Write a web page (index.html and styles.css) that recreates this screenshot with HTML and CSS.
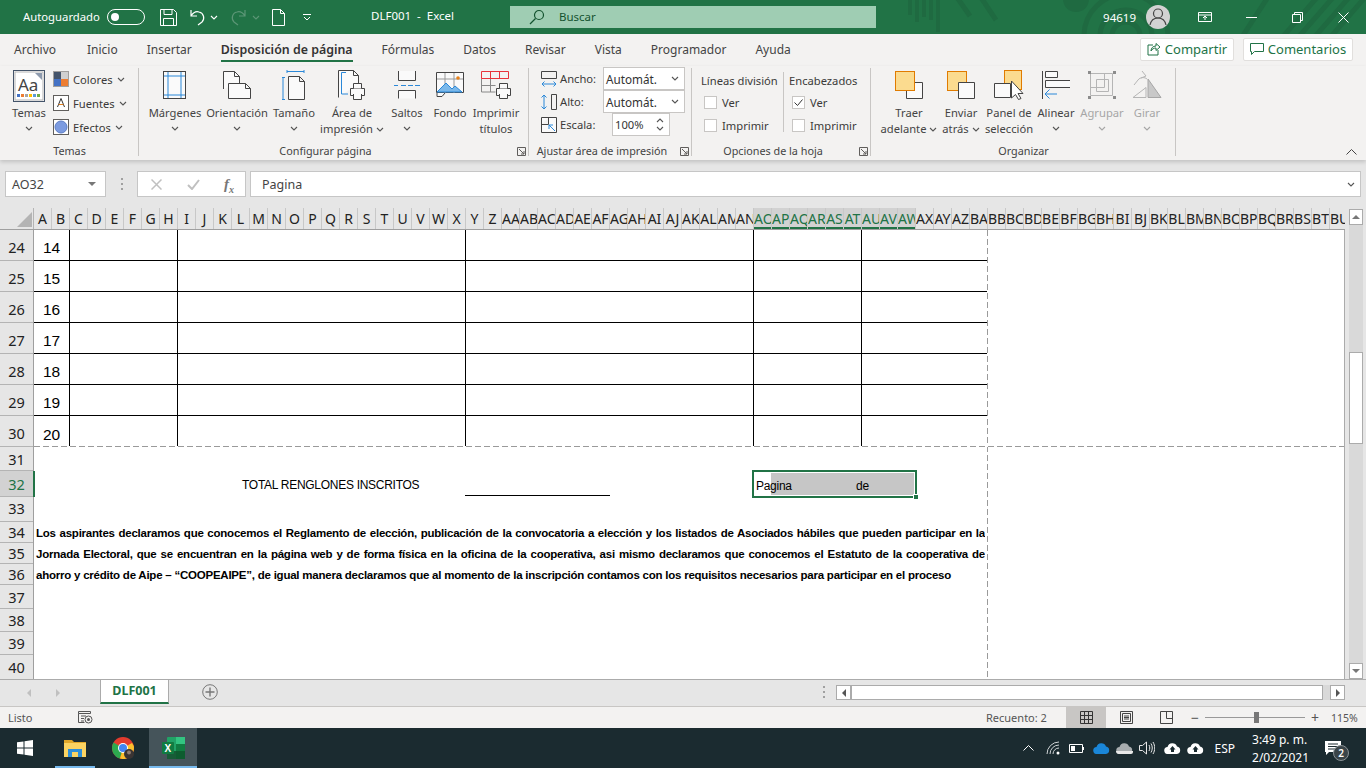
FILE: index.html
```html
<!DOCTYPE html>
<html lang="es">
<head>
  <meta charset="UTF-8" />
  <title>DLF001 - Excel</title>
  <link rel="stylesheet" href="styles.css">
</head>
<body>

  <svg class="sprite" aria-hidden="true">
    <symbol id="chev" viewBox="0 0 8 5"><path d="M1 1l3 3 3-3" fill="none" stroke="currentColor" stroke-width="1.1"/></symbol>
    <symbol id="launch" viewBox="0 0 9 9"><path d="M.5.5h8v8h-8z M2 2l5 5 M7 4v3H4" fill="none" stroke="#605e5c"/></symbol>
    <symbol id="cloudup" viewBox="0 0 17 11"><path d="M4 11a3.5 3.5 0 0 1-.5-7A5 5 0 0 1 13 3.500a3.800 3.800 0 0 1 0 7.500z" fill="#fff"/><path d="M8.500 3l3 3.500H10V9H7V6.500H5.500z" fill="#1b2b30"/></symbol>
  </svg>

  <!-- title bar -->
  <header class="titlebar">
    <svg class="title-art" viewBox="0 0 506 34">
      <g fill="#1f6a41">
        <rect x="48" y="0" width="4" height="15"/><rect x="55" y="0" width="4" height="22"/><rect x="62" y="0" width="4" height="17"/><rect x="69" y="0" width="4" height="20"/><rect x="76" y="0" width="4" height="32"/>
        <circle cx="216" cy="-1" r="13"/>
      </g>
      <g fill="none" stroke="#1f6a41" stroke-width="5">
        <circle cx="266" cy="36" r="14"/><circle cx="266" cy="36" r="26"/><circle cx="266" cy="36" r="42"/>
        <path d="M96 -4l14 20M120 -4l16 24M420 40l40-46M436 40l40-46M452 40l40-46M468 40l40-46M380 40l30-46"/>
      </g>
    </svg>
    <div class="autosave">
      <span class="autosave-text">Autoguardado</span>
      <span class="toggle"><i></i></span>
    </div>
    <svg class="qat save" viewBox="0 0 17 17" width="17" height="17"><path d="M.5.5h13l3 3v13H.5z M4 .5v5h8v-5 M3.500 16.500v-7h10v7" fill="none" stroke="#fff"/></svg>
    <svg class="qat undo" viewBox="0 0 16 17" width="16" height="17"><path d="M1 1v6h6 M1 7c2-3 5-5 8-4 5 1 6 7 3 10l-4 3" fill="none" stroke="#fff" stroke-width="1.200"/></svg>
    <svg class="chev chev-w"><use href="#chev"/></svg>
    <svg class="qat redo" viewBox="0 0 16 17" width="16" height="17"><path d="M15 1v6H9 M15 7c-2-3-5-5-8-4-5 1-6 7-3 10l4 3" fill="none" stroke="#5c9676" stroke-width="1.200"/></svg>
    <svg class="chev chev-dim"><use href="#chev"/></svg>
    <svg class="qat newdoc" viewBox="0 0 13 17" width="13" height="17"><path d="M.5.5h8l4 4v12H.500z M8.500.5v4h4" fill="none" stroke="#fff"/></svg>
    <svg class="qat more" viewBox="0 0 8 7" width="8" height="7"><path d="M0 .5h8 M1 3l3 3 3-3" fill="none" stroke="#fff"/></svg>
    <div class="doc-title">DLF001&nbsp; -&nbsp; Excel</div>
    <div class="search">
      <svg viewBox="0 0 16 16" width="16" height="16"><circle cx="10" cy="6" r="4.500" fill="none" stroke="#14532f" stroke-width="1.200"/><path d="M6.500 9.500L1 15" stroke="#14532f" stroke-width="1.200"/></svg>
      <span class="search-text">Buscar</span>
    </div>
    <div class="title-right">
      <span class="user-id">94619</span>
      <span class="avatar">
        <svg viewBox="0 0 24 24" width="24" height="24"><circle cx="12" cy="8.500" r="4.500" fill="none" stroke="#444" stroke-width="1.200"/><path d="M4 20c1-5 4-7 8-7s7 2 8 7" fill="none" stroke="#444" stroke-width="1.200"/></svg>
      </span>
      <svg class="win-btn display" viewBox="0 0 14 11" width="14" height="11"><path d="M.5.5h13v9H.5z M.5 3h13 M7 8V4.500 M5 6l2-2 2 2" fill="none" stroke="#fff"/></svg>
      <svg class="win-btn minim" viewBox="0 0 11 1" width="11" height="1"><path d="M0 .5h11" stroke="#fff"/></svg>
      <svg class="win-btn resto" viewBox="0 0 11 11" width="11" height="11"><path d="M.5 2.500h8v8h-8z M2.500 2.500v-2h8v8h-2" fill="none" stroke="#fff"/></svg>
      <svg class="win-btn closex" viewBox="0 0 11 11" width="11" height="11"><path d="M.5.5l10 10M10.500.5l-10 10" stroke="#fff"/></svg>
    </div>
  </header>

  <!-- ribbon tabs -->
  <nav class="tabs">
    <span class="tab-first">Archivo</span>
    <span>Inicio</span>
    <span>Insertar</span>
    <span class="tab-active">Disposición de página</span>
    <span>Fórmulas</span>
    <span>Datos</span>
    <span>Revisar</span>
    <span>Vista</span>
    <span>Programador</span>
    <span>Ayuda</span>
    <div class="tab-actions">
      <button class="pill pill-share">
        <svg viewBox="0 0 14 14" width="14" height="14"><path d="M6 3H1v10h10V8 M4 9c0-3 2-5 5-5V1.500L13 5 9 8.500V6C7 6 5 7 4 9z" fill="none" stroke="#217346"/></svg>
        Compartir
      </button>
      <button class="pill pill-comments">
        <svg viewBox="0 0 14 14" width="14" height="14"><path d="M.5 1.500h13v8h-9L1.500 12.500v-3h-1z" fill="none" stroke="#217346"/></svg>
        Comentarios
      </button>
    </div>
  </nav>

  <!-- ribbon -->
  <section class="ribbon">
    <div class="group group-temas">
      <div class="group-body">
        <div class="big big-temas">
          <svg class="big-icon" viewBox="0 0 32 32" width="32" height="32">
            <rect x=".5" y=".5" width="31" height="31" fill="#fff" stroke="#44546a"/>
            <rect x="2" y="2" width="28" height="28" fill="#fff" stroke="#b5b5b5"/>
            <path d="M22 3h7v7z" fill="#8d9aae"/>
            <text x="5" y="21" class="aa">Aa</text>
            <g><rect x="4" y="24" width="3" height="3" fill="#4472c4"/><rect x="8" y="24" width="3" height="3" fill="#ed7d31"/><rect x="12" y="24" width="3" height="3" fill="#a5a5a5"/><rect x="16" y="24" width="3" height="3" fill="#ffc000"/><rect x="20" y="24" width="3" height="3" fill="#5b9bd5"/><rect x="24" y="24" width="3" height="3" fill="#70ad47"/></g>
          </svg>
          <span>Temas</span>
          <svg class="chev"><use href="#chev"/></svg>
        </div>
        <div class="theme-list">
          <div class="theme-item">
            <svg viewBox="0 0 16 16" width="16" height="16"><rect x=".5" y=".5" width="15" height="15" fill="#fff" stroke="#a19f9d"/><rect x="1" y="1" width="7" height="7" fill="#44546a"/><rect x="8" y="1" width="7" height="7" fill="#d0d0d0"/><rect x="1" y="8" width="7" height="7" fill="#4472c4"/><rect x="8" y="8" width="7" height="7" fill="#ed7d31"/></svg>
            <span>Colores</span><svg class="chev"><use href="#chev"/></svg>
          </div>
          <div class="theme-item">
            <svg viewBox="0 0 16 16" width="16" height="16"><rect x=".5" y=".5" width="15" height="15" fill="#fff" stroke="#605e5c"/><path d="M4.500 12L8 3.500 11.500 12" fill="none" stroke="#333"/><path d="M5.500 9.500h5" stroke="#e08020"/></svg>
            <span>Fuentes</span><svg class="chev"><use href="#chev"/></svg>
          </div>
          <div class="theme-item">
            <svg viewBox="0 0 16 16" width="16" height="16"><rect x=".5" y=".5" width="15" height="15" fill="#fff" stroke="#605e5c"/><circle cx="8" cy="8" r="6" fill="#7c9be0" stroke="#5b7cc4"/></svg>
            <span>Efectos</span><svg class="chev"><use href="#chev"/></svg>
          </div>
        </div>
      </div>
      <div class="group-label">Temas</div>
    </div>

    <div class="group group-config">
      <div class="group-body config-grid">
        <div class="big">
          <svg class="big-icon" viewBox="0 0 24 28" width="24" height="28"><rect x=".5" y=".5" width="22" height="27" fill="#fafafa" stroke="#444"/><path d="M5 1v26M18 1v26M1 5h21M1 24h21" stroke="#2b88d8"/></svg>
          <span>Márgenes</span>
          <svg class="chev"><use href="#chev"/></svg>
        </div>
        <div class="big">
          <svg class="big-icon" viewBox="0 0 28 28" width="28" height="28"><path d="M.5 18V.5h11l5 5V12" fill="#fafafa" stroke="#444"/><path d="M11.500.5v5h5" fill="none" stroke="#444"/><path d="M5.500 12.500h17l5 5v10h-22z" fill="#fafafa" stroke="#444"/><path d="M22.500 12.500v5h5" fill="none" stroke="#444"/></svg>
          <span>Orientación</span>
          <svg class="chev"><use href="#chev"/></svg>
        </div>
        <div class="big">
          <svg class="big-icon" viewBox="0 0 24 30" width="24" height="30"><path d="M5 1.500h17M5 0v3M22 0v3M1 7v23M0 7.500h3M0 29.500h3" stroke="#2b88d8" fill="none"/><path d="M6.500 6.500h11l5 5v18h-16z M17.500 6.500v5h5" fill="#fafafa" stroke="#444"/></svg>
          <span>Tamaño</span>
          <svg class="chev"><use href="#chev"/></svg>
        </div>
        <div class="big">
          <svg class="big-icon" viewBox="0 0 28 30" width="28" height="30"><path d="M.5 27.500V.5h15l5 5v8" fill="#fafafa" stroke="#444"/><path d="M15.500.5v5h5" fill="none" stroke="#444"/><path d="M8 2.500H3.500V24H10" fill="none" stroke="#2b88d8"/><path d="M12.500 18.500h14v7h-14z" fill="#fafafa" stroke="#444"/><path d="M15.500 18.500v-5h8v5M15.500 24v5.500h8V24" fill="#fafafa" stroke="#444"/></svg>
          <span>Área de</span>
          <span class="with-chev">impresión <svg class="chev"><use href="#chev"/></svg></span>
        </div>
        <div class="big">
          <svg class="big-icon" viewBox="0 0 26 28" width="26" height="28"><path d="M4.500 0v9.500h17V0M4.500 27.500V19.500h17v8" fill="#fafafa" stroke="#444"/><path d="M0 14.500h4M7 14.500h5M14 14.500h5M21 14.500h5" stroke="#2b88d8"/></svg>
          <span>Saltos</span>
          <svg class="chev"><use href="#chev"/></svg>
        </div>
        <div class="big">
          <svg class="big-icon" viewBox="0 0 28 26" width="28" height="26"><path d="M.5.500h27v20H.500z" fill="#fafafa" stroke="#444"/><path d="M9 1v20M18 1v20M1 7h26" stroke="#999"/><path d="M1 20l9-9 6 6 3-3 7 6v0z" fill="#7ab8ea" stroke="#2b88d8"/><circle cx="22" cy="6" r="1.800" fill="#e8811a"/><path d="M1 21v3.500h5l3-3.500" fill="#fafafa" stroke="#444"/></svg>
          <span>Fondo</span>
        </div>
        <div class="big">
          <svg class="big-icon" viewBox="0 0 30 28" width="30" height="28"><path d="M.5 7.500h27M9.500.5v7M18.500.5v7M.5.500h27v7h-27z" fill="none" stroke="#e8333a"/><path d="M.5 8v13h14M.5 14.500h14M9.500 8v13" fill="none" stroke="#888"/><path d="M15.500 17.500h14v7h-14z" fill="#fafafa" stroke="#444"/><path d="M18.500 17.500v-5h8v5M18.500 23v4.500h8V23" fill="#fafafa" stroke="#444"/></svg>
          <span>Imprimir</span>
          <span>títulos</span>
        </div>
      </div>
      <div class="group-label label-launch">Configurar página<svg class="launch"><use href="#launch"/></svg></div>
    </div>

    <div class="group group-fit">
      <div class="group-body fit-body">
        <div class="fit-row">
          <svg viewBox="0 0 16 16" width="16" height="16"><path d="M.5.500h15v7H.5z" fill="none" stroke="#444"/><path d="M1 13h14M3.500 10.500L1 13l2.500 2.500M12.500 10.500L15 13l-2.500 2.500" fill="none" stroke="#2b88d8"/></svg>
          <label>Ancho:</label>
          <span class="select">Automát.<svg class="chev"><use href="#chev"/></svg></span>
        </div>
        <div class="fit-row">
          <svg viewBox="0 0 16 16" width="16" height="16"><path d="M10.500.500h5v15h-5z" fill="none" stroke="#444"/><path d="M3 1v14M.500 3.500L3 1l2.500 2.500M.500 12.500L3 15l2.500-2.500" fill="none" stroke="#2b88d8"/></svg>
          <label>Alto:</label>
          <span class="select">Automát.<svg class="chev"><use href="#chev"/></svg></span>
        </div>
        <div class="fit-row">
          <svg viewBox="0 0 16 16" width="16" height="16"><path d="M.5.500h15v15H.5z M.5 7.500h7v-7" fill="#fafafa" stroke="#444"/><path d="M14 14L8 8M8 12V8h4" fill="none" stroke="#2b88d8"/></svg>
          <label>Escala:</label>
          <span class="spin">100%<span class="spin-arrows"><svg class="chev up"><use href="#chev"/></svg><svg class="chev"><use href="#chev"/></svg></span></span>
        </div>
      </div>
      <div class="group-label label-launch">Ajustar área de impresión<svg class="launch"><use href="#launch"/></svg></div>
    </div>

    <div class="group group-sheet">
      <div class="group-body sheet-opts">
        <div class="opt-col opt-col-lines">
          <div class="opt-head">Líneas división</div>
          <div class="opt"><span class="check"></span>Ver</div>
          <div class="opt"><span class="check"></span>Imprimir</div>
        </div>
        <div class="opt-col">
          <div class="opt-head">Encabezados</div>
          <div class="opt"><span class="check"><svg viewBox="0 0 11 11" width="11" height="11"><path d="M1.500 5.500l3 3 5-6" fill="none" stroke="#333"/></svg></span>Ver</div>
          <div class="opt"><span class="check"></span>Imprimir</div>
        </div>
      </div>
      <div class="group-label label-launch">Opciones de la hoja<svg class="launch"><use href="#launch"/></svg></div>
    </div>

    <div class="group group-arrange">
      <div class="group-body arrange-grid">
        <div class="big">
          <svg class="big-icon" viewBox="0 0 28 28" width="28" height="28"><path d="M11.500 11.500h16v16h-16z" fill="#fafafa" stroke="#444"/><rect x=".5" y=".5" width="19" height="19" fill="#fbdb8f" stroke="#e07b00"/></svg>
          <span>Traer</span>
          <span class="with-chev">adelante <svg class="chev"><use href="#chev"/></svg></span>
        </div>
        <div class="big">
          <svg class="big-icon" viewBox="0 0 28 28" width="28" height="28"><rect x=".5" y=".5" width="19" height="19" fill="#fbdb8f" stroke="#e07b00"/><path d="M11.500 11.500h16v16h-16z" fill="#fafafa" stroke="#444"/></svg>
          <span>Enviar</span>
          <span class="with-chev">atrás <svg class="chev"><use href="#chev"/></svg></span>
        </div>
        <div class="big">
          <svg class="big-icon" viewBox="0 0 30 30" width="30" height="30"><rect x="10.500" y=".5" width="17" height="19" fill="#fbdb8f" stroke="#e07b00"/><path d="M.5 13.500h16v14H.5z" fill="#fafafa" stroke="#444"/><path d="M17.500 11v17l4-3.500 3 5 2.500-1-3-5h5z" fill="#fff" stroke="#444"/></svg>
          <span>Panel de</span>
          <span>selección</span>
        </div>
        <div class="big">
          <svg class="big-icon" viewBox="0 0 28 28" width="28" height="28"><path d="M.5 0v28" stroke="#444"/><path d="M3.500.5h12v6h-12zM3.500 9.500h25v7h-25z" fill="#fafafa" stroke="#444"/><path d="M15 24H3M7.500 19.500L3 24l4.500 4.500" fill="none" stroke="#2b88d8" transform="translate(0 -1)"/></svg>
          <span>Alinear</span>
          <svg class="chev"><use href="#chev"/></svg>
        </div>
        <div class="big big-off">
          <svg class="big-icon" viewBox="0 0 28 28" width="28" height="28"><path d="M2.500 2.500h22v22h-22zM8.500 8.500h12v12h-12z" fill="none" stroke="#b5b5b5"/><path d="M2.500 2.500h14v14h-14z" fill="none" stroke="#b5b5b5"/><path d="M0 0h3v3H0zM25 0h3v3h-3zM0 25h3v3H0zM25 25h3v3h-3z" fill="#8c8c8c"/></svg>
          <span>Agrupar</span>
          <svg class="chev"><use href="#chev"/></svg>
        </div>
        <div class="big big-off">
          <svg class="big-icon" viewBox="0 0 30 28" width="30" height="28"><path d="M16 26.500V8l13 18.500z" fill="#c8c8c8" stroke="#a6a6a6"/><path d="M1 26.500l13-10v10z M2 14l4-5c2-3 7-3 9-1M10 0l4 5-5 2" fill="none" stroke="#b5b5b5"/></svg>
          <span>Girar</span>
          <svg class="chev"><use href="#chev"/></svg>
        </div>
      </div>
      <div class="group-label">Organizar</div>
    </div>

    <svg class="collapse" viewBox="0 0 11 6" width="11" height="6"><path d="M.5 5.500l5-5 5 5" fill="none" stroke="#444"/></svg>
  </section>

  <!-- formula bar -->
  <section class="formula-bar">
    <div class="name-box"><span>AO32</span><i class="caret-down"></i></div>
    <div class="fb-dots"><i></i><i></i><i></i></div>
    <div class="fb-buttons">
      <svg viewBox="0 0 11 11" width="11" height="11"><path d="M.5.500l10 10M10.500.5l-10 10" stroke="#c0c0c0" stroke-width="1.500"/></svg>
      <svg viewBox="0 0 13 11" width="13" height="11"><path d="M1 6l4 4 7-9" fill="none" stroke="#c0c0c0" stroke-width="2"/></svg>
      <span class="fx">f<sub>x</sub></span>
    </div>
    <div class="fb-input">
      <span>Pagina</span>
      <svg class="chev"><use href="#chev"/></svg>
    </div>
  </section>

  <!-- worksheet -->
  <main class="workbook">
    <div class="sheet-area">
      <div class="col-heads">
        <div class="corner"><svg viewBox="0 0 15 15" width="15" height="15"><path d="M15 0v15H0z" fill="#b4b4b4"/></svg></div>
        <span>A</span><span>B</span><span>C</span><span>D</span><span>E</span><span>F</span><span>G</span><span>H</span><span>I</span><span>J</span><span>K</span><span>L</span><span>M</span><span>N</span><span>O</span><span>P</span><span>Q</span><span>R</span><span>S</span><span>T</span><span>U</span><span>V</span><span>W</span><span>X</span><span>Y</span><span>Z</span>
        <span>AA</span><span>AB</span><span>AC</span><span>AD</span><span>AE</span><span>AF</span><span>AG</span><span>AH</span><span>AI</span><span>AJ</span><span>AK</span><span>AL</span><span>AM</span><span>AN</span>
        <span class="sel">AO</span><span class="sel">AP</span><span class="sel">AQ</span><span class="sel">AR</span><span class="sel">AS</span><span class="sel">AT</span><span class="sel">AU</span><span class="sel">AV</span><span class="sel">AW</span>
        <span>AX</span><span>AY</span><span>AZ</span><span>BA</span><span>BB</span><span>BC</span><span>BD</span><span>BE</span><span>BF</span><span>BG</span><span>BH</span><span>BI</span><span>BJ</span><span>BK</span><span>BL</span><span>BM</span><span>BN</span><span>BO</span><span>BP</span><span>BQ</span><span>BR</span><span>BS</span><span>BT</span><span>BU</span>
      </div>
      <div class="sheet">
        <div class="row-heads">
          <div class="h-31">24</div><div class="h-31">25</div><div class="h-31">26</div><div class="h-31">27</div><div class="h-31">28</div><div class="h-31">29</div><div class="h-31">30</div>
          <div class="h-24">31</div>
          <div class="h-26 row-sel">32</div>
          <div class="h-25 row-33">33</div>
          <div class="h-21">34</div><div class="h-21">35</div><div class="h-21">36</div>
          <div class="h-24">37</div><div class="h-23">38</div><div class="h-23">39</div><div class="h-25">40</div>
        </div>
        <div class="cells">
          <div class="page-break-v"></div>
          <div class="t-row"><div>14</div><div></div><div></div><div></div><div></div><div></div></div>
          <div class="t-row"><div>15</div><div></div><div></div><div></div><div></div><div></div></div>
          <div class="t-row"><div>16</div><div></div><div></div><div></div><div></div><div></div></div>
          <div class="t-row"><div>17</div><div></div><div></div><div></div><div></div><div></div></div>
          <div class="t-row"><div>18</div><div></div><div></div><div></div><div></div><div></div></div>
          <div class="t-row"><div>19</div><div></div><div></div><div></div><div></div><div></div></div>
          <div class="t-row t-last"><div>20</div><div></div><div></div><div></div><div></div><div></div></div>
          <div class="h-24"></div>
          <div class="total-row h-26">
            <div class="total-label">TOTAL RENGLONES INSCRITOS</div>
            <div class="total-line"></div>
            <div class="sel-cell"><div class="sel-fill"><span class="sel-page">Pagina</span><span>de</span></div></div>
          </div>
          <div class="h-25"></div>
          <div class="decl h-21 decl-just">Los aspirantes declaramos que conocemos el Reglamento de elección, publicación de la convocatoria a elección y los listados de Asociados hábiles que pueden participar en la</div>
          <div class="decl h-21 decl-just">Jornada Electoral, que se encuentran en la página web y de forma física en la oficina de la cooperativa, asi mismo declaramos que conocemos el Estatuto de la cooperativa de</div>
          <div class="decl h-21">ahorro y crédito de Aipe – “COOPEAIPE”, de igual manera declaramos que al momento de la inscripción contamos con los requisitos necesarios para participar en el proceso</div>
        </div>
      </div>
    </div>
    <div class="v-scroll">
      <span class="sb-btn"><i class="tri tri-up"></i></span>
      <div class="v-track"><div class="v-thumb"></div></div>
      <span class="sb-btn"><i class="tri tri-down"></i></span>
    </div>
  </main>

  <!-- sheet tabs -->
  <section class="sheet-tabs">
    <div class="tab-nav"><i class="tri tri-left"></i><i class="tri tri-right"></i></div>
    <div class="sheet-tab">DLF001</div>
    <span class="add-sheet">
      <svg viewBox="0 0 16 16" width="16" height="16"><circle cx="8" cy="8" r="7.300" fill="none" stroke="#777"/><path d="M8 3.500v9M3.500 8h9" stroke="#777" stroke-width="1.400"/></svg>
    </span>
    <div class="fb-dots tabs-dots"><i></i><i></i><i></i></div>
    <div class="h-scroll">
      <span class="sb-btn"><i class="tri tri-left tri-dark"></i></span>
      <div class="h-thumb"></div>
      <span class="sb-btn sb-end"><i class="tri tri-right tri-dark"></i></span>
    </div>
  </section>

  <!-- status bar -->
  <footer class="statusbar">
    <span class="st-ready">Listo</span>
    <svg class="st-macro" viewBox="0 0 15 13" width="15" height="13"><path d="M.5.500h12v2h-12zM.5 2.500v9h6" fill="none" stroke="#555"/><path d="M3 5h5M3 7.500h3M3 10h3" stroke="#555"/><circle cx="10.500" cy="8.500" r="3.500" fill="none" stroke="#555"/><circle cx="10.500" cy="8.500" r="1.500" fill="#555"/></svg>
    <span class="st-count">Recuento: 2</span>
    <span class="view view-on"><svg viewBox="0 0 13 13" width="13" height="13"><path d="M.5.500h12v12H.5zM4.500 1v12M8.500 1v12M1 4.500h12M1 8.500h12" fill="none" stroke="#333"/></svg></span>
    <span class="view"><svg viewBox="0 0 13 13" width="13" height="13"><path d="M.5.500h12v12H.5zM2.500 2.500h8v8h-8z" fill="none" stroke="#444"/><path d="M4 5h5M4 6.500h5M4 8h5" stroke="#444"/></svg></span>
    <span class="view"><svg viewBox="0 0 13 13" width="13" height="13"><path d="M.5.500h12v12H.5zM6.500 1v6.500H13" fill="none" stroke="#444"/></svg></span>
    <div class="zoom">
      <span class="zoom-sign">−</span>
      <div class="zoom-track"><i></i></div>
      <span class="zoom-sign">+</span>
      <span class="zoom-val">115%</span>
    </div>
  </footer>

  <!-- windows taskbar -->
  <footer class="taskbar">
    <span class="tb-item tb-start">
      <svg viewBox="0 0 16 16" width="16" height="16"><path d="M0 2.300L6.500 1.400v6.100H0zM7.500 1.300L16 0v7.500H7.500zM0 8.500h6.500v6.100L0 13.700zM7.500 8.500H16V16l-8.500-1.300z" fill="#fff"/></svg>
    </span>
    <span class="tb-item tb-open">
      <svg viewBox="0 0 22 18" width="22" height="18"><path d="M0 1h8l2 2h12v3H0z" fill="#e2a82a"/><path d="M0 4h22v14H0z" fill="#fcd462"/><path d="M4 10h14v8H4z" fill="#2f8fd8"/><path d="M8 13h6v5H8z" fill="#fcd462"/></svg>
    </span>
    <span class="tb-item tb-open tb-chrome">
      <svg viewBox="0 0 22 22" width="22" height="22"><circle cx="11" cy="11" r="11" fill="#e33b2e"/><path d="M11 11L1.500 5.500A11 11 0 0 0 8 21.600z" fill="#2da94f"/><path d="M11 11l-3 10.600A11 11 0 0 0 21.800 9L20 6z" fill="#fbc02d"/><circle cx="11" cy="11" r="5" fill="#fff"/><circle cx="11" cy="11" r="4" fill="#4285f4"/><circle cx="17" cy="17" r="5" fill="#3a3433"/><circle cx="17" cy="15.500" r="2" fill="#8c7a70"/></svg>
    </span>
    <span class="tb-item tb-open tb-active">
      <svg viewBox="0 0 24 24" width="24" height="24"><rect x="6" y="1" width="18" height="22" rx="1" fill="#21a366"/><rect x="15" y="1" width="9" height="7" fill="#33c481"/><rect x="6" y="8" width="9" height="7" fill="#21a366"/><rect x="15" y="8" width="9" height="7" fill="#107c41"/><rect x="6" y="15" width="9" height="8" fill="#185c37"/><rect x="15" y="15" width="9" height="8" fill="#0e5c2f"/><rect x="1" y="6" width="12" height="12" rx="1" fill="#107c41"/><text x="3.500" y="16" class="xl">X</text></svg>
    </span>
    <div class="tray">
      <svg viewBox="0 0 11 6" width="11" height="6"><path d="M.5 5.500l5-5 5 5" fill="none" stroke="#fff"/></svg>
      <svg class="tray-wifi" viewBox="0 0 14 14" width="14" height="14"><path d="M1 13A12 12 0 0 1 13 1M4 13a9 9 0 0 1 9-9M7 13a6 6 0 0 1 6-6" fill="none" stroke="#cfd4d6"/><circle cx="12" cy="12" r="1.500" fill="#fff"/></svg>
      <svg class="tray-gap" viewBox="0 0 15 9" width="15" height="9"><path d="M.5.500h13v8H.5z" fill="none" stroke="#fff"/><rect x="2" y="2" width="4" height="5" fill="#fff"/><rect x="14" y="3" width="1" height="3" fill="#fff"/></svg>
      <svg class="tray-gap" viewBox="0 0 17 11" width="17" height="11"><path d="M4 11a3.500 3.500 0 0 1-.5-7A5 5 0 0 1 13 3.500a3.800 3.800 0 0 1 0 7.500z" fill="#1a86d8"/></svg>
      <svg viewBox="0 0 17 11" width="17" height="11"><path d="M4 11a3.500 3.500 0 0 1-.5-7A5 5 0 0 1 13 3.500a3.800 3.800 0 0 1 0 7.500z" fill="#a8adaf"/><path d="M0 8h17v1a2 2 0 0 1-2 2H3a3 3 0 0 1-3-3z" fill="#e8e8e8"/></svg>
      <svg viewBox="0 0 16 14" width="16" height="14"><path d="M.5 4.500h3l4-3.500v12l-4-3.500h-3z M10 4c1 2 1 4 0 6 M12 2.500c1.700 3 1.700 6 0 9 M14 1c2.300 4 2.300 8 0 12" fill="none" stroke="#e8e8e8"/></svg>
      <svg class="tray-gap" viewBox="0 0 17 11" width="17" height="11"><use href="#cloudup"/></svg>
      <svg viewBox="0 0 17 11" width="17" height="11"><use href="#cloudup"/></svg>
      <span class="tray-lang">ESP</span>
    </div>
    <div class="clock"><div>3:49 p. m.</div><div>2/02/2021</div></div>
    <span class="notif">
      <svg viewBox="0 0 16 15" width="16" height="15"><path d="M0 0h16v11H4l-3 3v-3H0z" fill="#fff"/><path d="M3 3h10M3 5.500h10M3 8h7" stroke="#1b2b30"/></svg>
      <b>2</b>
    </span>
  </footer>

</body>
</html>
```

FILE: styles.css
```css
* {
  box-sizing: border-box;
}

html, body {
  margin: 0;
  height: 100%;
}

body {
  width: 1366px;
  height: 768px;
  overflow: hidden;
  display: flex;
  flex-direction: column;
  font-family: "Noto Sans", sans-serif;
  font-size: 12px;
  color: #3b3a39;
  background: #e6e6e6;
}

.sprite {
  display: none;
}

.chev {
  width: 8px;
  height: 5px;
  display: block;
  color: #555;
  flex: none;
}

/* Title bar */
.titlebar {
  position: relative;
  height: 34px;
  flex: none;
  display: flex;
  align-items: center;
  background: #217346;
  color: #fff;
}

.title-art {
  position: absolute;
  left: 860px;
  top: 0;
  width: 506px;
  height: 34px;
}

.autosave {
  position: relative;
  display: flex;
  align-items: center;
  gap: 7px;
  width: 122px;
  margin-left: 23px;
  font-size: 11.300px;
  white-space: nowrap;
}

.autosave-text {
  margin-top: -2px;
}

.toggle {
  width: 38px;
  height: 16px;
  flex: none;
  border: 1px solid #fff;
  border-radius: 8px;
  display: flex;
  align-items: center;
  padding-left: 3px;
}

.toggle i {
  width: 8px;
  height: 8px;
  background: #fff;
  border-radius: 50%;
}

.qat {
  position: relative;
  flex: none;
}

.save { margin-left: 15px; }
.undo { margin-left: 13px; }
.chev-w { color: #fff; margin-left: 4px; position: relative; }
.redo { margin-left: 12px; }
.chev-dim { color: #5c9676; margin-left: 6px; position: relative; }
.newdoc { margin-left: 12px; }
.more { margin-left: 18px; }

.doc-title {
  position: relative;
  margin: -3px 0 0 60px;
  width: 139px;
  font-size: 11.500px;
  white-space: nowrap;
}

.search {
  position: relative;
  width: 366px;
  height: 22px;
  background: #9fcdb3;
  display: flex;
  align-items: center;
  gap: 14px;
  padding-left: 19px;
  color: #14532f;
  font-size: 11.500px;
}

.search-text {
  margin-top: -2px;
}

.title-right {
  position: relative;
  margin-left: auto;
  display: flex;
  align-items: center;
}

.user-id { font-size: 11.500px; margin-right: 10px; }

.avatar {
  width: 24px;
  height: 24px;
  border-radius: 50%;
  background: #d2d2d2;
  margin-right: 28px;
}

.win-btn { flex: none; }
.display { margin-right: 34px; }
.minim { margin-right: 35px; }
.resto { margin-right: 35px; }
.closex { margin-right: 17px; }

/* Ribbon tabs */
.tabs {
  height: 32px;
  flex: none;
  display: flex;
  align-items: center;
  gap: 29px;
  padding: 0 0 2px 14px;
  background: #f3f2f1;
  font-size: 12px;
  color: #444;
}

.tab-first {
  margin-right: 2px;
}

.tab-active {
  position: relative;
  font-weight: 600;
  font-size: 12.400px;
  color: #333;
}

.tab-active::after {
  content: "";
  position: absolute;
  left: 0;
  right: 0;
  bottom: -4px;
  height: 2px;
  background: #217346;
}

.tab-actions {
  margin-left: auto;
  margin-right: 13px;
  display: flex;
  gap: 9px;
}

.pill {
  height: 23px;
  display: flex;
  align-items: center;
  gap: 4px;
  padding: 0;
  justify-content: center;
  border: 1px solid #e1dfdd;
  border-radius: 2px;
  background: #fff;
  color: #217346;
  font: 13px "Noto Sans", sans-serif;
}

.pill-share { width: 94px; }
.pill-comments { width: 110px; }

/* Ribbon */
.ribbon {
  position: relative;
  height: 94px;
  flex: none;
  display: flex;
  background: #f3f2f1;
  box-shadow: 0 2px 4px rgba(0, 0, 0, 0.16);
  z-index: 2;
}

.group {
  position: relative;
  display: flex;
  flex-direction: column;
  padding-top: 2px;
  font-size: 11.200px;
}

.group::after {
  content: "";
  position: absolute;
  right: 0;
  top: 2px;
  bottom: 4px;
  width: 1px;
  background: #c8c6c4;
}

.group-temas { width: 139px; }
.group-config { width: 390px; }
.group-fit { width: 163px; }
.group-sheet { width: 179px; }
.group-arrange { width: 305px; }

.group-body {
  height: 76px;
  display: flex;
}

.group-label {
  position: relative;
  height: 16px;
  margin-top: 2px;
  text-align: center;
  line-height: 14px;
  font-size: 10.800px;
  color: #444;
}

.label-launch {
  padding-right: 17px;
}

.launch {
  position: absolute;
  right: 3px;
  top: 3px;
  width: 9px;
  height: 9px;
}

.big {
  display: flex;
  flex-direction: column;
  align-items: center;
  line-height: 16px;
  color: #444;
  white-space: nowrap;
}

.big .chev {
  margin-top: 5px;
}

.big-icon {
  height: 30px;
  margin-top: 2px;
  margin-bottom: 5px;
}

.big-off {
  color: #a6a6a6;
}

.big-off .chev {
  color: #a6a6a6;
}

.with-chev {
  display: flex;
  align-items: center;
  gap: 3px;
}

.with-chev .chev,
.big .with-chev .chev {
  margin-top: 1px;
}

.big-temas {
  width: 32px;
  margin-left: 13px;
}

.big-temas .big-icon {
  height: 32px;
  margin-top: 2px;
  margin-bottom: 3px;
}

.aa {
  font: 17px "Noto Sans", sans-serif;
  fill: #444;
}

.theme-list {
  margin-left: 8px;
  padding-top: 3px;
  display: flex;
  flex-direction: column;
  gap: 8px;
}

.theme-item {
  display: flex;
  align-items: center;
  gap: 4px;
  height: 16px;
}

.config-grid {
  display: grid;
  grid-template-columns: 58px 66px 48px 68px 42px 44px 48px;
  margin-left: 7px;
}

.arrange-grid {
  display: grid;
  grid-template-columns: 56px 48px 48px 46px 46px 44px;
  margin-left: 10px;
}

/* Fit to page */
.fit-body {
  flex-direction: column;
  padding-left: 12px;
  margin-top: -1px;
  margin-bottom: 1px;
}

.fit-row {
  height: 23px;
  flex: none;
  display: flex;
  align-items: center;
  gap: 3px;
}

.fit-row label {
  width: 40px;
  font-size: 11.200px;
}

.select {
  width: 82px;
  height: 23px;
  background: #fff;
  border: 1px solid #c8c6c4;
  display: flex;
  align-items: center;
  justify-content: space-between;
  padding: 0 5px 0 2px;
  font-size: 11.700px;
  color: #333;
}

.spin {
  width: 58px;
  height: 23px;
  margin-left: 9px;
  background: #fff;
  border: 1px solid #c8c6c4;
  display: flex;
  align-items: center;
  justify-content: space-between;
  padding: 0 5px 0 2px;
  color: #333;
}

.spin-arrows {
  display: flex;
  flex-direction: column;
  gap: 3px;
}

.spin .up {
  transform: rotate(180deg);
}

/* Sheet options */
.sheet-opts {
  padding-left: 9px;
  padding-top: 4px;
}

.opt-col {
  width: 82px;
  height: 60px;
  flex: none;
}

.opt-col-lines {
  width: 83px;
  margin-right: 5px;
  border-right: 1px solid #c8c6c4;
}

.opt-head {
  height: 19px;
  line-height: 18px;
  white-space: nowrap;
  font-size: 11.200px;
}

.opt {
  height: 23px;
  display: flex;
  align-items: center;
  gap: 5px;
  padding-left: 3px;
}

.check {
  width: 13px;
  height: 13px;
  background: #fff;
  border: 1px solid #c8c6c4;
  display: flex;
  align-items: center;
  justify-content: center;
}

.collapse {
  position: absolute;
  right: 9px;
  bottom: 5px;
}

/* Formula bar */
.formula-bar {
  height: 48px;
  flex: none;
  display: flex;
  align-items: flex-start;
  padding: 11px 5px 0;
  background: #e6e6e6;
}

.name-box {
  width: 101px;
  height: 26px;
  background: #fff;
  border: 1px solid #c6c6c6;
  display: flex;
  align-items: center;
  justify-content: space-between;
  padding: 0 9px 0 6px;
  font-size: 12.500px;
  color: #444;
}

.caret-down {
  width: 0;
  height: 0;
  border-left: 4px solid transparent;
  border-right: 4px solid transparent;
  border-top: 4px solid #777;
}

.fb-dots {
  width: 31px;
  height: 26px;
  display: flex;
  flex-direction: column;
  align-items: center;
  justify-content: center;
  gap: 3px;
}

.fb-dots i {
  width: 2px;
  height: 2px;
  background: #a0a0a0;
}

.fb-buttons {
  width: 109px;
  height: 26px;
  background: #fff;
  border: 1px solid #c6c6c6;
  display: flex;
  align-items: center;
  justify-content: space-between;
  padding: 0 11px 0 13px;
  margin-right: 4px;
}

.fx {
  font: italic bold 15px "Liberation Serif", serif;
  color: #777;
}

.fx sub {
  font-size: 10px;
  line-height: 0;
}

.fb-input {
  flex: 1;
  height: 26px;
  background: #fff;
  border: 1px solid #c6c6c6;
  display: flex;
  align-items: center;
  justify-content: space-between;
  padding: 0 5px 0 11px;
  font-size: 12.500px;
  color: #444;
}

/* Worksheet */
.workbook {
  flex: none;
  height: 471px;
  display: flex;
}

.sheet-area {
  width: 1345px;
  display: flex;
  flex-direction: column;
  overflow: hidden;
}

.col-heads {
  height: 22px;
  flex: none;
  display: flex;
  border-bottom: 1px solid #9f9f9f;
}

.corner {
  width: 34px;
  flex: none;
  display: flex;
  align-items: flex-end;
  justify-content: flex-end;
  padding: 0 1px 2px 0;
  border-right: 1px solid #b4b4b4;
}

.col-heads span {
  width: 18px;
  flex: none;
  overflow: hidden;
  text-align: center;
  white-space: nowrap;
  border-right: 1px solid #c8c8c8;
  font-size: 14px;
  line-height: 21px;
  color: #222;
}

.col-heads .sel {
  background: #d2d2d2;
  color: #217346;
  box-shadow: inset 0 -2px 0 #217346;
}

.sheet {
  height: 449px;
  display: flex;
  background: #fff;
  overflow: hidden;
  border-right: 1px solid #ababab;
}

.row-heads {
  width: 34px;
  flex: none;
  background: #e6e6e6;
  border-right: 1px solid #9f9f9f;
  font-size: 14.500px;
  text-align: center;
  color: #222;
}

.row-heads > div {
  display: flex;
  align-items: center;
  justify-content: center;
  border-bottom: 1px solid #b4b4b4;
}

.row-heads .h-31 {
  padding-top: 3px;
}

.row-heads .row-sel {
  padding-top: 1px;
  background: #d2d2d2;
  color: #217346;
  box-shadow: 2px 0 0 #217346;
}

.row-heads .row-33 {
  padding-bottom: 2px;
}

.h-31 { height: 31px; }
.h-26 { height: 26px; }
.h-25 { height: 25px; }
.h-24 { height: 24px; }
.h-23 { height: 23px; }
.h-21 { height: 21px; }

.cells {
  position: relative;
  flex: 1;
  font-family: "Liberation Sans", Arial, sans-serif;
  color: #000;
}

.page-break-v {
  position: absolute;
  left: 953px;
  top: 0;
  bottom: 0;
  width: 1px;
  background: repeating-linear-gradient(to bottom, #9a9a9a 0 6px, transparent 6px 9px);
}

.t-row {
  position: relative;
  height: 31px;
  width: 953px;
  display: grid;
  grid-template-columns: 36px 108px 288px 288px 108px 125px;
  border-bottom: 1px solid #000;
}

.t-row > div {
  border-right: 1px solid #000;
  display: flex;
  align-items: center;
  justify-content: center;
  padding-top: 6px;
  font-size: 15.500px;
}

.t-row > div:last-child {
  border-right: none;
}

.t-last {
  width: auto;
  grid-template-columns: 36px 108px 288px 288px 108px 1fr;
  border-bottom: none;
}

.t-last::after {
  content: "";
  position: absolute;
  left: 0;
  right: 0;
  bottom: 0;
  height: 1px;
  background: repeating-linear-gradient(to right, #9a9a9a 0 6px, #fff 6px 9px);
}

.total-row {
  display: grid;
  grid-template-columns: 431px 287px 165px;
  font-size: 12px;
  letter-spacing: -0.28px;
  line-height: 28px;
}

.total-label {
  padding-left: 208px;
  white-space: nowrap;
}

.total-line {
  width: 145px;
  height: 25px;
  border-bottom: 1px solid #000;
}

.sel-cell {
  position: relative;
  height: 28px;
  margin-top: -1px;
  border: 2px solid #217346;
}

.sel-cell::after {
  content: "";
  position: absolute;
  right: -4px;
  bottom: -4px;
  box-sizing: content-box;
  width: 4px;
  height: 4px;
  background: #217346;
  border: 1px solid #fff;
}

.sel-fill {
  height: 100%;
  display: flex;
  align-items: center;
  padding: 3px 0 0 1px;
  border: 1px solid #fff;
  background: linear-gradient(90deg, #fff 16px, #c6c6c6 16px);
}

.sel-page {
  width: 100px;
}

.decl {
  padding: 1px 0 0 2px;
  width: 951px;
  font-size: 11.500px;
  letter-spacing: -0.23px;
  font-weight: bold;
  line-height: 21px;
  white-space: nowrap;
}

.decl-just {
  white-space: normal;
  text-align: justify;
  text-align-last: justify;
  overflow: hidden;
}

/* Scrollbars */
.v-scroll {
  width: 21px;
  display: flex;
  flex-direction: column;
  padding: 1px 3px 0 4px;
  background: #e6e6e6;
}

.sb-btn {
  width: 14px;
  height: 16px;
  flex: none;
  background: #fff;
  border: 1px solid #ababab;
  display: flex;
  align-items: center;
  justify-content: center;
}

.v-track {
  flex: 1;
  background: #d9d9d9;
  position: relative;
}

.v-thumb {
  position: absolute;
  top: 127px;
  left: 0;
  right: 0;
  height: 92px;
  background: #fff;
  border: 1px solid #ababab;
}

.tri {
  width: 0;
  height: 0;
  display: block;
}

.tri-up {
  border-left: 4px solid transparent;
  border-right: 4px solid transparent;
  border-bottom: 4px solid #777;
}

.tri-down {
  border-left: 4px solid transparent;
  border-right: 4px solid transparent;
  border-top: 4px solid #777;
}

.tri-left {
  border-top: 4px solid transparent;
  border-bottom: 4px solid transparent;
  border-right: 4px solid #c0c0c0;
}

.tri-right {
  border-top: 4px solid transparent;
  border-bottom: 4px solid transparent;
  border-left: 4px solid #c0c0c0;
}

.tri-dark.tri-left { border-right-color: #555; }
.tri-dark.tri-right { border-left-color: #555; }

/* Sheet tabs */
.sheet-tabs {
  height: 27px;
  flex: none;
  display: flex;
  align-items: flex-start;
  background: #e6e6e6;
  border-top: 1px solid #ababab;
}

.tab-nav {
  width: 100px;
  height: 25px;
  display: flex;
  align-items: center;
  gap: 25px;
  padding-left: 27px;
}

.sheet-tab {
  width: 69px;
  height: 25px;
  margin-top: -1px;
  background: #fff;
  border: 1px solid #ababab;
  border-bottom: 2px solid #217346;
  text-align: center;
  line-height: 22px;
  font-size: 12.500px;
  font-weight: 700;
  color: #217346;
}

.add-sheet {
  margin: 4px 0 0 33px;
  display: block;
  height: 16px;
}

.tabs-dots {
  margin-left: 602px;
  width: 8px;
  height: 24px;
}

.h-scroll {
  margin-left: 8px;
  margin-top: 5px;
  width: 509px;
  height: 15px;
  display: flex;
  background: #d9d9d9;
}

.h-scroll .sb-btn {
  width: 15px;
  height: 15px;
}

.h-thumb {
  width: 472px;
  height: 15px;
  background: #fff;
  border: 1px solid #ababab;
}

.sb-end {
  margin-left: auto;
}

/* Status bar */
.statusbar {
  height: 22px;
  flex: none;
  display: flex;
  align-items: center;
  background: #f3f2f1;
  border-top: 1px solid #c8c6c4;
  font-size: 11px;
  color: #555;
}

.st-ready { margin-left: 8px; width: 70px; }
.st-macro { margin-right: 893px; flex: none; }
.st-count { width: 80px; white-space: nowrap; }

.view {
  width: 40px;
  height: 21px;
  display: flex;
  align-items: center;
  justify-content: center;
}

.view-on {
  background: #c8c6c4;
}

.zoom {
  display: flex;
  align-items: center;
  margin-left: 4px;
}

.zoom-sign {
  width: 10px;
  text-align: center;
  font-size: 14px;
  line-height: 14px;
}

.zoom-track {
  position: relative;
  width: 100px;
  height: 1px;
  margin: 0 5px;
  background: #999;
}

.zoom-track i {
  position: absolute;
  left: 49px;
  top: -5px;
  width: 5px;
  height: 11px;
  background: #777;
}

.zoom-val {
  margin-left: 11px;
  font-size: 10.500px;
}

/* Taskbar */
.taskbar {
  height: 40px;
  flex: none;
  display: flex;
  align-items: center;
  background: #1b2b30;
  color: #fff;
}

.tb-item {
  height: 40px;
  display: flex;
  align-items: center;
  justify-content: center;
}

.tb-start { width: 48px; padding-left: 1px; }

.tb-open {
  position: relative;
  width: 48px;
  margin-left: 3px;
}

.tb-open::after {
  content: "";
  position: absolute;
  left: 4px;
  right: 4px;
  bottom: 0;
  height: 2px;
  background: #76b9ed;
}

.tb-chrome {
  margin-left: 0;
}

.tb-chrome::after {
  display: none;
}

.tb-active {
  background: #45545a;
  margin-left: 2px;
}

.tb-active::after {
  left: 0;
  right: 0;
}

.xl {
  font: bold 10px "Liberation Sans", sans-serif;
  fill: #fff;
}

.tray {
  margin-left: auto;
  display: flex;
  align-items: center;
  gap: 6px;
}

.tray-wifi {
  margin-left: 6px;
}

.tray-gap {
  margin-left: 3px;
}

.tray-lang {
  font-size: 12px;
  margin-left: 4px;
}

.clock {
  margin: 0 16px 0 17px;
  padding-top: 1px;
  font-size: 12px;
  line-height: 18px;
  text-align: left;
  white-space: nowrap;
}

.notif {
  position: relative;
  margin-right: 25px;
  display: block;
  height: 15px;
}

.notif b {
  position: absolute;
  left: 8px;
  top: 4px;
  width: 16px;
  height: 16px;
  border-radius: 50%;
  background: #3a4448;
  border: 1px solid #8a9296;
  text-align: center;
  font-size: 10px;
  line-height: 14px;
  font-weight: 600;
}
```
